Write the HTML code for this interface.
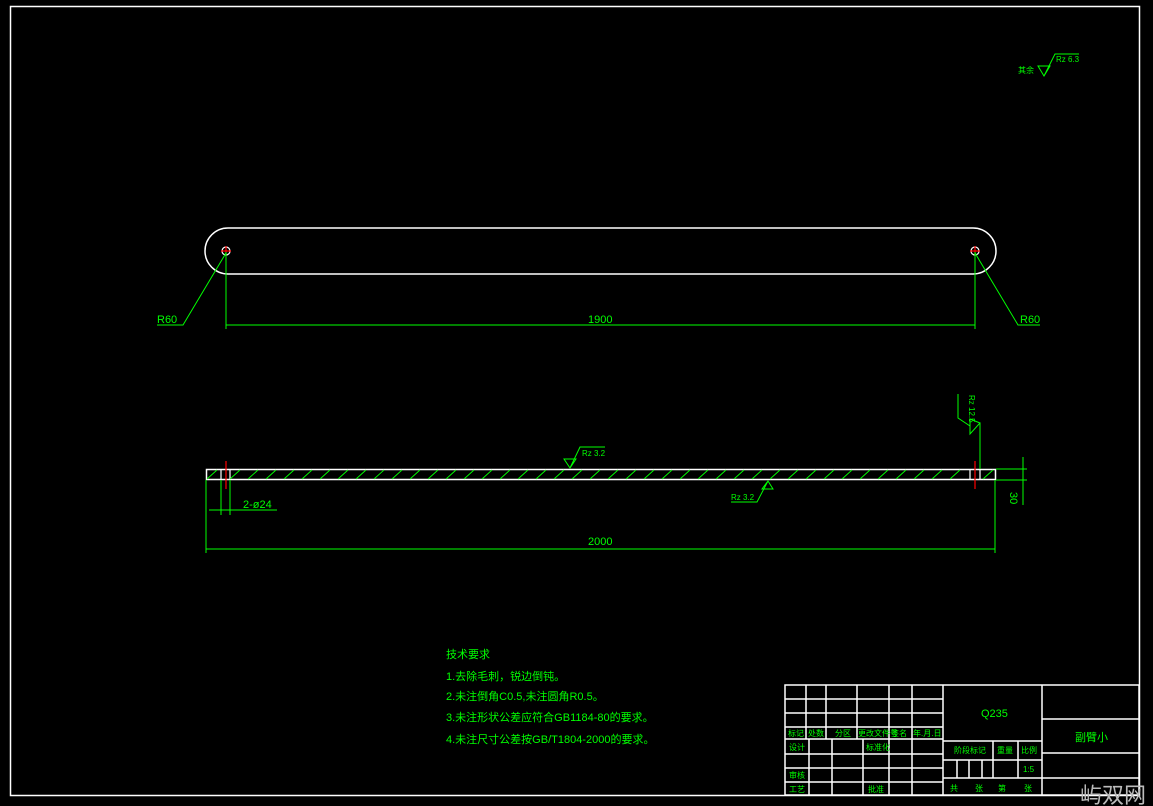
<!DOCTYPE html>
<html><head><meta charset="utf-8"><style>
html,body{margin:0;padding:0;background:#000;width:1153px;height:806px;overflow:hidden}
svg{display:block}
text{font-family:"Liberation Sans","Noto Sans CJK SC",sans-serif;fill:#00ff00}
</style></head><body>
<svg width="1153" height="806" viewBox="0 0 1153 806" xmlns="http://www.w3.org/2000/svg">
<rect x="0" y="0" width="1153" height="806" fill="#000"/>
<!-- frame -->
<rect x="10.5" y="6.5" width="1129" height="789" fill="none" stroke="#fff" stroke-width="1.5"/>
<!-- roughness top right -->
<g stroke="#00ff00" fill="none" stroke-width="1">
<path d="M1038 66 H1050 L1044 76 Z M1044 76 L1055 54 H1079"/>
</g>
<text x="1018" y="73" font-size="8">其余</text>
<text x="1056" y="62" font-size="8">Rz 6.3</text>

<!-- top view -->
<path d="M228 228 H973 A23 23 0 0 1 973 274 H228 A23 23 0 0 1 228 228 Z" fill="none" stroke="#fff" stroke-width="1.5"/>
<circle cx="226" cy="251" r="4" fill="none" stroke="#fff" stroke-width="1.2"/>
<circle cx="975" cy="251" r="4" fill="none" stroke="#fff" stroke-width="1.2"/>
<g stroke="#f00" stroke-width="1.2">
<path d="M221 251 H231 M226 246 V256 M970 251 H980 M975 246 V256"/>
</g>
<g stroke="#00ff00" stroke-width="1" fill="none">
<path d="M226 252 V329 M975 252 V329 M226 325 H975"/>
<path d="M226 253 L183 325 H157"/>
<path d="M975 253 L1018 325 H1040"/>
</g>
<text x="157" y="323" font-size="11">R60</text>
<text x="1020" y="323" font-size="11">R60</text>
<text x="588" y="323" font-size="11">1900</text>

<!-- side view bar -->
<rect x="206.5" y="469.5" width="789" height="10" fill="none" stroke="#fff" stroke-width="1.5"/>
<g stroke="#fff" stroke-width="1.2"><path d="M221 469 V480 M230 469 V480 M970 469 V480 M980 469 V480"/></g>
<g stroke="#00ff00" stroke-width="0.9" id="h">
<path d="M207 479 L217 470 M230 479 L240 470 M248 479 L258 470 M266 479 L276 470 M284 479 L294 470 M302 479 L312 470 M320 479 L330 470 M338 479 L348 470 M356 479 L366 470 M374 479 L384 470 M392 479 L402 470 M410 479 L420 470 M428 479 L438 470 M446 479 L456 470 M464 479 L474 470 M482 479 L492 470 M500 479 L510 470 M518 479 L528 470 M536 479 L546 470 M554 479 L564 470 M572 479 L582 470 M590 479 L600 470 M608 479 L618 470 M626 479 L636 470 M644 479 L654 470 M662 479 L672 470 M680 479 L690 470 M698 479 L708 470 M716 479 L726 470 M734 479 L744 470 M752 479 L762 470 M770 479 L780 470 M788 479 L798 470 M806 479 L816 470 M824 479 L834 470 M842 479 L852 470 M860 479 L870 470 M878 479 L888 470 M896 479 L906 470 M914 479 L924 470 M932 479 L942 470 M950 479 L960 470 M983 479 L993 470"/>
</g>
<g stroke="#f00" stroke-width="1.2"><path d="M226 461 V489 M975 461 V489"/></g>
<g stroke="#00ff00" stroke-width="1" fill="none">
<path d="M206 480 V553 M995 480 V553 M206 549 H995"/>
<path d="M221 480 V515 M230 480 V515 M209 510 H277"/>
<path d="M996 469 H1027 M996 480 H1027 M1023 457 V505"/>
<!-- Rz 3.2 top -->
<path d="M564 459 H576 L570 468 Z M570 468 L580 447 H605"/>
<!-- Rz 3.2 bottom -->
<path d="M762 489 H773 L768 481 Z M768 481 L757 502 H731"/>
<!-- right vertical roughness -->
<path d="M980 423 V469 M980 423 L970 419 V434 Z M970 426 L958 418 V394"/>
</g>
<text x="582" y="456" font-size="8">Rz 3.2</text>
<text x="731" y="500" font-size="8">Rz 3.2</text>
<text x="0" y="0" font-size="8" transform="translate(969,395) rotate(90)">Rz 12.5</text>
<text x="243" y="508" font-size="11">2-ø24</text>
<text x="588" y="545" font-size="11">2000</text>
<text x="0" y="0" font-size="11" transform="translate(1010,492) rotate(90)">30</text>

<!-- notes -->
<g font-size="11">
<text x="446" y="658">技术要求</text>
<text x="446" y="680">1.去除毛刺，锐边倒钝。</text>
<text x="446" y="700">2.未注倒角C0.5,未注圆角R0.5。</text>
<text x="446" y="721">3.未注形状公差应符合GB1184-80的要求。</text>
<text x="446" y="743">4.未注尺寸公差按GB/T1804-2000的要求。</text>
</g>

<!-- title block -->
<g stroke="#fff" stroke-width="1.5" fill="none">
<rect x="785" y="685" width="354" height="110"/>
<path d="M943 685 V795 M1042 685 V795"/>
<path d="M785 699 H943 M785 713 H943 M785 727 H943 M785 739 H943 M785 754 H943 M785 768 H943 M785 782 H943"/>
<path d="M806 685 V739 M826 685 V739 M857 685 V739 M889 685 V795 M912 685 V795"/>
<path d="M809 739 V795 M832 739 V795 M863 739 V795"/>
<path d="M943 741 H1042 M943 760 H1042 M943 778 H1042"/>
<path d="M993 741 V778 M1018 741 V778 M957 760 V778 M969 760 V778 M982 760 V778"/>
<path d="M1042 719 H1139 M1042 753 H1139 M1042 778 H1139"/>
</g>
<g font-size="8">
<text x="788" y="736">标记</text><text x="808" y="736">处数</text><text x="835" y="736">分区</text>
<text x="858" y="736">更改文件号</text><text x="891" y="736">签名</text><text x="913" y="736">年.月.日</text>
<text x="789" y="750">设计</text><text x="866" y="750">标准化</text>
<text x="789" y="778">审核</text><text x="789" y="792">工艺</text><text x="868" y="792">批准</text>
<text x="954" y="753">阶段标记</text><text x="997" y="753">重量</text><text x="1021" y="753">比例</text>
<text x="1023" y="772">1:5</text>
<text x="950" y="791">共</text><text x="975" y="791">张</text><text x="998" y="791">第</text><text x="1024" y="791">张</text>
</g>
<text x="981" y="717" font-size="11">Q235</text>
<text x="1075" y="741" font-size="11">副臂小</text>
<text x="1080" y="803" font-size="22" style="fill:#bbb">屿双网</text>
</svg>
</body></html>
